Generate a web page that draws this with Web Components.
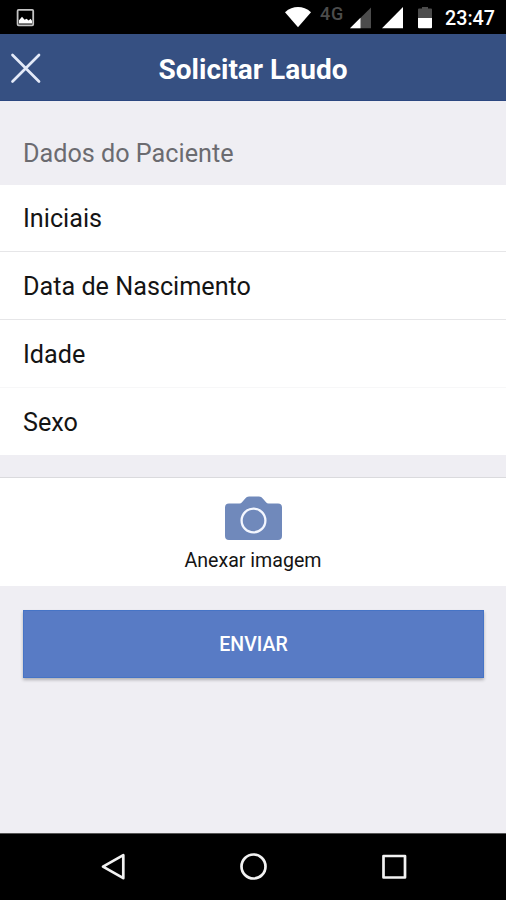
<!DOCTYPE html>
<html lang="pt-BR">
<head>
<meta charset="utf-8">
<title>Solicitar Laudo</title>
<style>
body { margin: 0; font-family: Roboto, "Liberation Sans", sans-serif; color: #141414; overflow: hidden; }
</style>
</head>
<body>
<laudo-screen></laudo-screen>
<script>
function define(name, html) {
  const template = document.createElement('template');
  template.innerHTML = html;
  customElements.define(name, class extends HTMLElement {
    constructor() {
      super();
      this.attachShadow({ mode: 'open' }).append(template.content.cloneNode(true));
    }
  });
}

define('status-bar', `
<style>
:host { display: flex; height: 34px; background: #000; color: #fff; align-items: center; box-sizing: border-box; padding: 0 11px 0 16px; }
svg { display: block; flex: none; }
.spacer { flex: 1; }
.net { font-size: 18px; font-weight: 500; letter-spacing: .8px; color: #4c4c4c; line-height: 20px; margin: -7px 5px 0 9px; width: 25px; white-space: nowrap; }
time { font-size: 19.700px; font-weight: 500; line-height: 24px; margin: 4px 0 0 13px; width: 50px; white-space: nowrap; }
</style>
<svg width="19" height="34" viewBox="0 0 19 34"><rect x="1.6" y="9.9" width="15.6" height="15.4" rx="1" fill="none" stroke="#c4c4c4" stroke-width="1.8"/><path d="M3 23.6v-3.4l3-3.4 2.6 3 2-1 2 1.6 2-1.6 1.4 2v2.8z" fill="#fff"/></svg>
<span class="spacer"></span>
<svg width="26" height="34" viewBox="0 0 26 34"><path d="M0 12.2C4 8.500 8.500 7 13 7s9 1.500 13 5.200L13 27.200z" fill="#fff"/></svg>
<span class="net">4G</span>
<svg width="21" height="34" viewBox="0 0 21 34"><path d="M21 7.500v20.700H0z" fill="#4c4c4c"/><path d="M10.500 17.800v10.400H0z" fill="#fff"/></svg>
<svg width="21" height="34" viewBox="0 0 21 34" style="margin-left:11px"><path d="M21 7v21.200H0z" fill="#fff"/></svg>
<svg width="14" height="34" viewBox="0 0 14 34" style="margin-left:15px"><path d="M0 18V9.500q0-1 1-1h3V7h6v1.500h3q1 0 1 1V18z" fill="#4c4c4c"/><path d="M0 18h14v9.200q0 1-1 1H1q-1 0-1-1z" fill="#fff"/></svg>
<time>23:47</time>`);

define('title-bar', `
<style>
:host { display: grid; grid-template-columns: 52px 1fr 52px; height: 67px; box-sizing: border-box; background: #365082; border-bottom: 1px solid #2c4780; align-items: center; color: #fff; }
h1 { margin: 5px 0 0; text-align: center; font-size: 28px; line-height: 34px; font-weight: 700; white-space: nowrap; }
svg { display: block; }
</style>
<svg width="52" height="66" viewBox="0 0 52 66"><path d="M12.500 21l26.500 26.500M39 21L12.500 47.500" stroke="#e4eaf8" stroke-width="2.700" stroke-linecap="round"/></svg>
<h1><slot></slot></h1>`);

define('section-title', `
<style>
:host { display: block; height: 84px; box-sizing: border-box; padding: 37px 23px 0; font-size: 25.200px; line-height: 32px; color: #6b6b70; white-space: nowrap; }
</style><slot></slot>`);

define('form-row', `
<style>
:host { display: flex; align-items: center; height: 68px; box-sizing: border-box; padding: 2px 23px 0; background: #fff; border-bottom: 1px solid #e6e6e8; font-size: 25.200px; line-height: 32px; white-space: nowrap; }
:host([first]) { height: 67px; padding-top: 1px; }
:host([faint]) { border-color: #f7f7f8; }
:host([last]) { border-color: #fff; height: 67px; padding-top: 3px; }
</style><slot></slot>`);

define('attach-image', `
<style>
:host { display: flex; flex-direction: column; align-items: center; height: 109px; box-sizing: border-box; margin-top: 22px; padding-top: 18px; border-top: 1px solid #dadadd; background: #fff; font-size: 19.600px; line-height: 24px; }
svg { display: block; margin-bottom: 9px; }
</style>
<svg width="57" height="44" viewBox="0 0 57 44"><g transform="translate(0 .5)"><path d="M4 7h10.500q1.500 0 2.500-1.200l3-3.600Q21.700 0 24 0h10q2.300 0 4 2.200l3 3.600Q42 7 43.500 7H53q4 0 4 4v28.500q0 4-4 4H4q-4 0-4-4V11q0-4 4-4z" fill="#7089bb"/><circle cx="28.500" cy="24" r="11.900" fill="none" stroke="#f4f7ff" stroke-width="2.300"/></g></svg>
<slot></slot>`);

define('submit-button', `
<style>
:host { display: block; padding: 24px 22px 0 23px; }
button { display: block; width: 100%; height: 68px; margin: 0; padding: 2px 0 0; box-sizing: border-box; border: 1px solid #4674c6; border-radius: 0; background: #587bc5; color: #fff; font: 500 19.500px/24px Roboto, "Liberation Sans", sans-serif; box-shadow: 0 2px 3px rgba(0,0,0,.26); }
</style><button><slot></slot></button>`);

define('nav-bar', `
<style>
:host { display: flex; height: 67px; box-sizing: border-box; margin-top: auto; background: #000; border-top: 1px solid #555; justify-content: space-between; align-items: center; padding: 0 98px 0 100px; }
svg { display: block; fill: none; stroke: #f2f2f2; stroke-width: 2.700; stroke-linejoin: round; }
</style>
<svg width="28" height="28" viewBox="0 0 28 28"><path d="M23.300 2.200v23L3 13.700z"/></svg>
<svg width="28" height="28" viewBox="0 0 28 28"><circle cx="13.500" cy="13.500" r="12"/></svg>
<svg width="28" height="28" viewBox="0 0 28 28"><rect x="3.500" y="3" width="21.500" height="21.500"/></svg>`);

define('laudo-screen', `
<style>
:host { display: flex; flex-direction: column; height: 900px; background: #efeef3; }
</style>
<status-bar></status-bar>
<title-bar>Solicitar Laudo</title-bar>
<section-title>Dados do Paciente</section-title>
<form-row first>Iniciais</form-row>
<form-row>Data de Nascimento</form-row>
<form-row faint>Idade</form-row>
<form-row last>Sexo</form-row>
<attach-image>Anexar imagem</attach-image>
<submit-button>ENVIAR</submit-button>
<nav-bar></nav-bar>`);
</script>
</body>
</html>
